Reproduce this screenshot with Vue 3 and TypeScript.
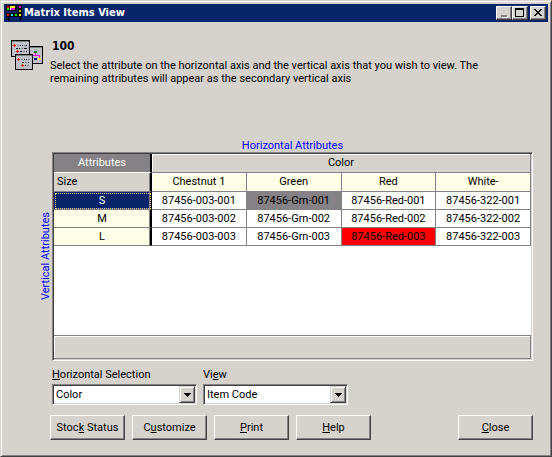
<script setup lang="ts">
import { ref } from 'vue'

interface Cell {
  code: string
  state?: 'inactive' | 'alert'
}
interface SizeRow {
  size: string
  cells: Cell[]
}

const colors: string[] = ['Chestnut 1', 'Green', 'Red', 'White-']
const rows: SizeRow[] = [
  {
    size: 'S',
    cells: [
      { code: '87456-003-001' },
      { code: '87456-Grn-001', state: 'inactive' },
      { code: '87456-Red-001' },
      { code: '87456-322-001' },
    ],
  },
  {
    size: 'M',
    cells: [
      { code: '87456-003-002' },
      { code: '87456-Grn-002' },
      { code: '87456-Red-002' },
      { code: '87456-322-002' },
    ],
  },
  {
    size: 'L',
    cells: [
      { code: '87456-003-003' },
      { code: '87456-Grn-003' },
      { code: '87456-Red-003', state: 'alert' },
      { code: '87456-322-003' },
    ],
  },
]

const selectedSize = ref('S')
const axis = ref('Color')
const view = ref('Item Code')
</script>

<template>
  <main class="window">
    <header class="titlebar">
      <svg class="app-icon" viewBox="0 0 16 16" shape-rendering="crispEdges" aria-hidden="true">
        <path fill="#000" d="M0 0h11v6H0zM12 0h4v12h-4zM0 8h16v4H0zM1 13h3v1H1zM2 12h1v4H2zM13 13h3v1h-3zM14 12h1v4h-1zM0 14h1v1H0z" />
        <path fill="#f00" d="M1 1h2v2H1zM1 9h2v2H1z" />
        <path fill="#ff0" d="M4 1h5v2H4zM13 9h2v2h-2z" />
        <path fill="#c8b400" d="M13 5h2v2h-2z" />
        <path fill="#f0f" d="M5 3h4v2H5zM13 1h2v2h-2z" />
        <path fill="#0f0" d="M1 3h2v2H1zM9 9h2v2H9z" />
        <path fill="#0ff" d="M5 9h2v2H5z" />
        <path fill="#fff" d="M4 3h1v2H4z" />
      </svg>
      <h1 class="title">Matrix Items View</h1>
      <div class="controls">
        <button class="control" type="button" aria-label="Minimize" disabled>
          <svg viewBox="0 0 12 10" shape-rendering="crispEdges">
            <path fill="#fff" d="M4 8h6v2H4z" />
            <path fill="#848284" d="M3 7h6v2H3z" />
          </svg>
        </button>
        <button class="control" type="button" aria-label="Maximize">
          <svg viewBox="0 0 12 10" shape-rendering="crispEdges">
            <path fill="#000" fill-rule="evenodd" d="M1 0h9v9H1zM2 2v6h7V2z" />
          </svg>
        </button>
        <button class="control close" type="button" aria-label="Close window">
          <svg viewBox="0 0 12 10" shape-rendering="crispEdges">
            <path fill="#000" d="M2 1h2v1h1v1h2V2h1V1h2v1H9v1H8v1H7v1h1v1h1v1h1v1H8V7H7V6H5v1H4v1H2V7h1V6h1V5h1V4H4V3H3V2H2z" />
          </svg>
        </button>
      </div>
    </header>

    <section class="intro">
      <svg class="intro-icon" viewBox="0 0 32 30" shape-rendering="crispEdges" aria-hidden="true">
        <path fill="#000" d="M18 6h14v18H18z" />
        <path fill="#c0c0c8" d="M19 8h12v15H19z" />
        <path fill="#808080" d="M19 7h12v1H19z" />
        <path fill="#008000" d="M23 11h3v2h-3z" />
        <path fill="#f0f" d="M24 13h1v2h4v3h-1v-2h-6v-1h2z" />
        <path fill="#000080" d="M23 18h3v2h-3z" />
        <path fill="#ff0" d="M27 18h3v2h-3z" />
        <path fill="#000" d="M0 0h19v17H0z" />
        <path fill="#c0c0c8" d="M1 2h17v14H1z" />
        <path fill="#808080" d="M1 1h17v1H1zM6 5h2v1H6zM13 5h2v1h-2zM10 8h2v1h-2zM12 11h2v1h-2z" />
        <path fill="#f00" d="M3 4h1v1h1v1H4v1H3V6H2V5h1zM6 10h1v1h1v1H7v1H6v-1H5v-1h1z" />
        <path fill="#000" d="M9 5h1v1H9zM11 5h1v1h-1zM15 5h1v1h-1zM5 8h2v1H5zM8 8h1v1H8zM13 8h3v1h-3zM9 11h2v1H9zM15 11h1v1h-1z" />
        <path fill="#000" d="M4 14h18v16H4z" />
        <path fill="#c0c0c8" d="M5 16h16v13H5z" />
        <path fill="#808080" d="M5 15h16v1H5zM10 19h2v1h-2zM17 19h2v1h-2zM14 22h2v1h-2zM16 25h2v1h-2z" />
        <path fill="#f00" d="M7 18h1v1h1v1H8v1H7v-1H6v-1h1zM11 24h1v1h1v1h-1v1h-1v-1h-1v-1h1z" />
        <path fill="#000" d="M13 19h1v1h-1zM15 19h1v1h-1zM11 22h2v1h-2zM17 22h1v1h-1zM14 25h1v1h-1z" />
      </svg>
      <div>
        <h2 class="item">100</h2>
        <p class="hint">
          Select the attribute on the horizontal axis and the vertical axis that you wish to view. The<br />
          remaining attributes will appear as the secondary vertical axis
        </p>
      </div>
    </section>

    <section class="matrix">
      <div class="axis-x">Horizontal Attributes</div>
      <div class="axis-y"><span class="axis-y-text">Vertical Attributes</span></div>
      <div class="panel">
        <table class="grid">
          <colgroup>
            <col class="size-col" />
            <col v-for="c in colors" :key="c" />
          </colgroup>
          <thead>
            <tr class="group-row">
              <th class="corner" scope="col">Attributes</th>
              <th class="group" scope="colgroup" :colspan="colors.length">Color</th>
            </tr>
            <tr class="name-row">
              <th class="size-title" scope="col">Size</th>
              <th v-for="c in colors" :key="c" class="name" scope="col">{{ c }}</th>
            </tr>
          </thead>
          <tbody>
            <tr v-for="row in rows" :key="row.size" @click="selectedSize = row.size">
              <th class="size" :class="{ selected: row.size === selectedSize }" scope="row">{{ row.size }}</th>
              <td v-for="cell in row.cells" :key="cell.code" class="code" :class="cell.state">{{ cell.code }}</td>
            </tr>
          </tbody>
        </table>
        <div class="status"></div>
      </div>
    </section>

    <section class="filters">
      <div class="field">
        <label for="axis"><u>H</u>orizontal Selection</label>
        <div class="combo">
          <select id="axis" v-model="axis">
            <option>Color</option>
            <option>Size</option>
          </select>
          <span class="drop"><svg viewBox="0 0 7 4" shape-rendering="crispEdges"><path d="M0 0h7v1H6v1H5v1H4v1H3V3H2V2H1V1H0z" /></svg></span>
        </div>
      </div>
      <div class="field">
        <label for="view">Vi<u>e</u>w</label>
        <div class="combo">
          <select id="view" v-model="view">
            <option>Item Code</option>
          </select>
          <span class="drop"><svg viewBox="0 0 7 4" shape-rendering="crispEdges"><path d="M0 0h7v1H6v1H5v1H4v1H3V3H2V2H1V1H0z" /></svg></span>
        </div>
      </div>
    </section>

    <footer class="actions">
      <button class="action" type="button">Stoc<u>k</u> Status</button>
      <button class="action" type="button">C<u>u</u>stomize</button>
      <button class="action" type="button"><u>P</u>rint</button>
      <button class="action" type="button"><u>H</u>elp</button>
      <button class="action last" type="button"><u>C</u>lose</button>
    </footer>
  </main>
</template>

<style>
body {
  background: #d6d3ce;
}
</style>

<style scoped>
* {
  box-sizing: border-box;
}
.window {
  display: flex;
  flex-direction: column;
  min-height: 100vh;
  padding: 2px 2px 16px;
  border: 1px solid;
  border-color: #d6d3ce #424142 #424142 #d6d3ce;
  box-shadow: inset 1px 1px #fff, inset -1px -1px #848284;
  background: #d6d3ce;
  color: #000;
  font: 11px/13px Roboto, "DejaVu Sans Condensed", sans-serif;
}
.titlebar {
  display: flex;
  align-items: center;
  height: 18px;
  margin: 1px;
  padding: 0 2px;
  background: #08246b;
}
.app-icon {
  width: 16px;
  height: 16px;
}
.title {
  flex: 1;
  margin: 0 0 0 2px;
  color: #fff;
  font: bold 11px/18px "DejaVu Sans Condensed", sans-serif;
}
.controls {
  display: flex;
}
.control {
  display: grid;
  place-items: center;
  width: 16px;
  height: 14px;
  padding: 0;
  border: 1px solid;
  border-color: #fff #424142 #424142 #fff;
  box-shadow: inset -1px -1px #848284;
  background: #d6d3ce;
}
.control svg {
  width: 12px;
  height: 10px;
}
.close {
  margin-left: 2px;
}
.intro {
  display: flex;
  gap: 7px;
  padding: 17px 48px 0 8px;
}
.intro-icon {
  flex: none;
  width: 32px;
  height: 30px;
}
.item {
  margin: 0 0 6px 2px;
  font: bold 12px/13px "DejaVu Sans Condensed", sans-serif;
}
.hint {
  margin: 0;
}
.matrix {
  display: grid;
  flex: 1;
  grid-template: auto 1fr / 13px 1fr;
  margin: 54px 16px 0 36px;
}
.axis-x {
  grid-column: 2;
  color: #00f;
  text-align: center;
}
.axis-y {
  display: grid;
  place-items: center;
  color: #00f;
}
.axis-y-text {
  writing-mode: vertical-rl;
  transform: rotate(180deg);
}
.panel {
  display: flex;
  flex-direction: column;
  justify-content: space-between;
  border: 1px solid;
  border-color: #848284 #fff #fff #848284;
  box-shadow: inset 1px 1px #424142, inset -1px -1px #d6d3ce;
  padding: 1px;
  background: #fff;
}
.grid {
  width: 100%;
  border-spacing: 0;
  table-layout: fixed;
}
.size-col {
  width: 98px;
}
.grid th,
.grid td {
  height: 18px;
  padding: 0;
  border: 0 solid #848284;
  border-width: 0 1px 1px 0;
  font-weight: normal;
  line-height: 17px;
  text-align: center;
  white-space: nowrap;
}
.grid .group-row th,
.grid .name-row th {
  height: 19px;
  line-height: 18px;
}
.grid th:first-child {
  border-right: 2px solid #000;
  box-shadow: inset -1px 0 #848284;
}
.grid .corner {
  border-bottom-color: #fff;
  background: #848284;
  color: #fff;
}
.grid .group {
  background: #d6d3ce;
  box-shadow: inset 1px 1px #fff;
}
.grid .size-title {
  padding-left: 3px;
  background: #d6d3ce;
  text-align: left;
}
.name {
  background: #ffffe7;
  box-shadow: inset 1px 1px #fff;
}
.size {
  background: #ffffe7;
}
.grid .selected {
  background: #08246b;
  color: #fff;
  outline: 1px dotted #f7db94;
  outline-offset: -2px;
}
.code {
  background: #fff;
}
.inactive {
  background: #848284;
}
.alert {
  background: #f00;
}
.status {
  height: 24px;
  border: 1px solid #848284;
  border-left: 0;
  box-shadow: inset 1px 1px #fff;
  background: #d6d3ce;
}
.filters {
  display: flex;
  gap: 6px;
  margin: 7px 16px 0 49px;
}
.field {
  display: flex;
  flex-direction: column;
  gap: 3px;
  width: 145px;
}
.combo {
  display: grid;
  grid-template-columns: 1fr 16px;
  height: 21px;
  padding: 1px;
  border: 1px solid;
  border-color: #848284 #fff #fff #848284;
  box-shadow: inset 1px 1px #424142, inset -1px -1px #d6d3ce;
  background: #fff;
}
.combo select {
  grid-area: 1 / 1 / 2 / 3;
  min-width: 0;
  margin: 0;
  padding: 0 18px 0 2px;
  border: 0;
  appearance: none;
  background: transparent;
  color: #000;
  font: inherit;
}
.drop {
  display: grid;
  grid-area: 1 / 2;
  place-items: center;
  border: 1px solid;
  border-color: #d6d3ce #424142 #424142 #d6d3ce;
  box-shadow: inset 1px 1px #fff, inset -1px -1px #848284;
  background: #d6d3ce;
  pointer-events: none;
}
.drop svg {
  width: 7px;
  height: 4px;
}
.actions {
  display: flex;
  gap: 7px;
  margin: 10px 16px 0 47px;
}
.action {
  width: 75px;
  height: 25px;
  padding: 0;
  border: 1px solid;
  border-color: #fff #424142 #424142 #fff;
  box-shadow: inset -1px -1px #848284;
  background: #d6d3ce;
  color: #000;
  font: inherit;
}
.last {
  margin-left: auto;
}
</style>
